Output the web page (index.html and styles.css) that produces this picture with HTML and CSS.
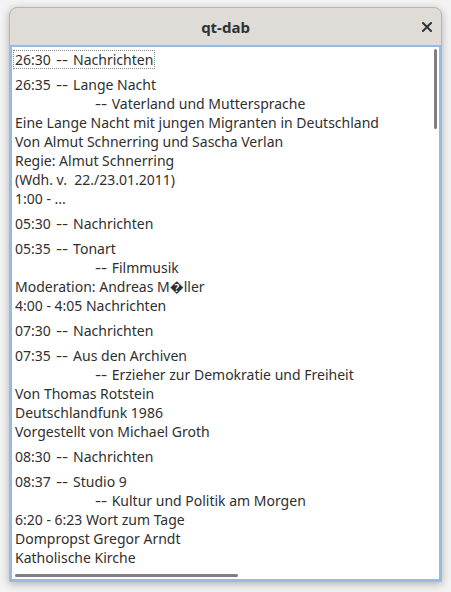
FILE: index.html
```html
<!DOCTYPE html>
<html>
<head>
<meta charset="utf-8">
<link rel="stylesheet" href="styles.css">
</head>
<body>
<div class="window">
  <div class="titlebar">
    <span></span>
    <span class="title">qt-dab</span>
    <span class="close"><svg width="10" height="10" viewBox="0 0 10 10"><path d="M1 1L9 9M9 1L1 9" stroke="#2e3436" stroke-width="2" stroke-linecap="square"/></svg></span>
  </div>
  <div class="frame">
    <div class="list">
      <div class="item"><span class="focus">26:30 <span class="dd">--</span> Nachrichten</span></div>
      <div class="item">
        <div>26:35 <span class="dd">--</span> Lange Nacht</div>
        <div class="ind"><span class="dd">--</span> Vaterland und Muttersprache</div>
        <div>Eine Lange Nacht mit jungen Migranten in Deutschland</div>
        <div>Von Almut Schnerring und Sascha Verlan</div>
        <div>Regie: Almut Schnerring</div>
        <div>(Wdh. v.&nbsp; 22./23.01.2011)</div>
        <div>1:00 - ...</div>
      </div>
      <div class="item"><div>05:30 <span class="dd">--</span> Nachrichten</div></div>
      <div class="item">
        <div>05:35 <span class="dd">--</span> Tonart</div>
        <div class="ind"><span class="dd">--</span> Filmmusik</div>
        <div>Moderation: Andreas M&#xFFFD;ller</div>
        <div>4:00 - 4:05 Nachrichten</div>
      </div>
      <div class="item"><div>07:30 <span class="dd">--</span> Nachrichten</div></div>
      <div class="item">
        <div>07:35 <span class="dd">--</span> Aus den Archiven</div>
        <div class="ind"><span class="dd">--</span> Erzieher zur Demokratie und Freiheit</div>
        <div>Von Thomas Rotstein</div>
        <div>Deutschlandfunk 1986</div>
        <div>Vorgestellt von Michael Groth</div>
      </div>
      <div class="item"><div>08:30 <span class="dd">--</span> Nachrichten</div></div>
      <div class="item">
        <div>08:37 <span class="dd">--</span> Studio 9</div>
        <div class="ind"><span class="dd">--</span> Kultur und Politik am Morgen</div>
        <div>6:20 - 6:23 Wort zum Tage</div>
        <div>Dompropst Gregor Arndt</div>
        <div>Katholische Kirche</div>
      </div>
    </div>
    <div class="vscroll"></div>
    <div class="hscroll"></div>
  </div>
</div>
</body>
</html>
```

FILE: styles.css
```css
html, body {
  margin: 0;
  padding: 0;
}
body {
  background: #f3f3f3;
  width: 451px;
  height: 592px;
  overflow: hidden;
  font-family: "Noto Sans", "DejaVu Sans", sans-serif;
}
.window {
  margin: 7px 0 0 9px;
  width: 433px;
  height: 575px;
  box-sizing: border-box;
  border: 1px solid #b9b5b1;
  border-radius: 8px 8px 0 0;
  background: #dfdbd7;
  box-shadow: 0 2px 8px rgba(0, 0, 0, 0.28);
  display: flex;
  flex-direction: column;
  overflow: hidden;
}
.titlebar {
  height: 37px;
  flex: none;
  display: grid;
  grid-template-columns: 1fr auto 1fr;
  align-items: center;
}
.title {
  font-weight: bold;
  font-size: 15px;
  color: #2e3436;
}
.close {
  justify-self: end;
  margin-right: 9px;
  display: flex;
  margin-top: 1px;
}
.frame {
  flex: 1;
  border: 2px solid #93bbe8;
  background: #fff;
  position: relative;
  overflow: hidden;
}
.list {
  padding: 0 0 0 1px;
  font-size: 14px;
  line-height: 19px;
  color: #2f2f2f;
  white-space: nowrap;
}
.item {
  padding: 3px 2px;
}
.item:first-child {
  padding-left: 0;
}
.focus {
  display: inline-block;
  padding: 0 2px;
  outline: 1px dotted #8a8a8a;
  outline-offset: -1px;
}
.dd {
  display: inline-block;
  transform: translateX(0.5px) scaleX(1.35);
  margin: 0 3px;
}
.ind {
  padding-left: 78px;
}
.vscroll {
  position: absolute;
  right: 2px;
  top: 2px;
  width: 3px;
  height: 80px;
  background: #7f7f7f;
  border-radius: 2px;
}
.hscroll {
  position: absolute;
  left: 3px;
  bottom: 2px;
  width: 223px;
  height: 3px;
  background: #7f7f7f;
  border-radius: 2px;
}
```
